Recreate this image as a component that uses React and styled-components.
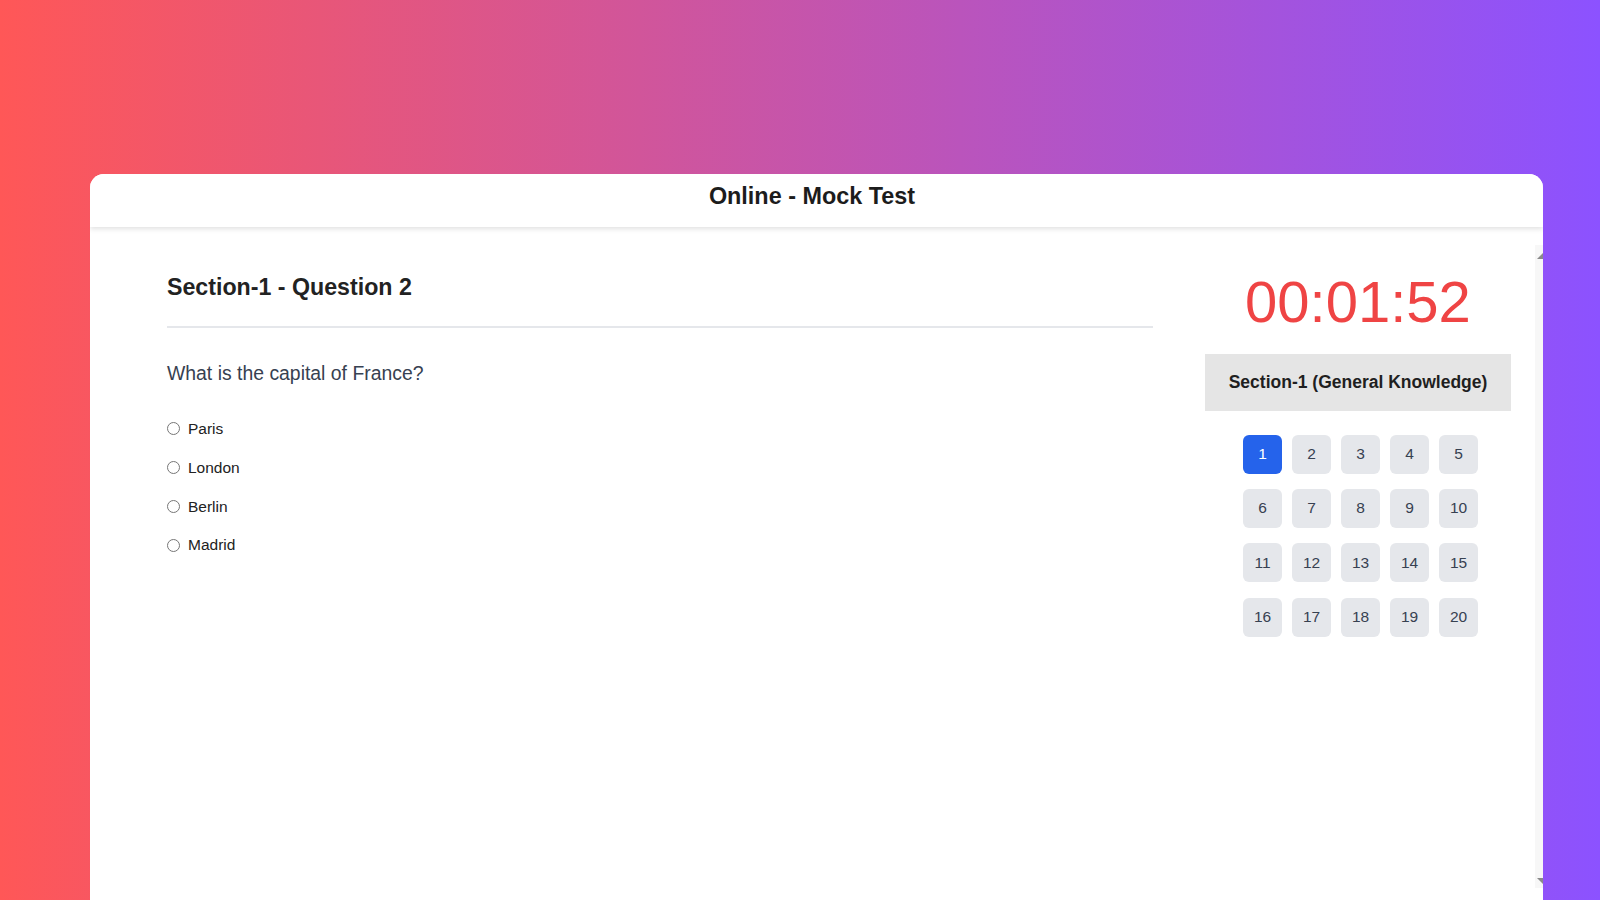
import React, { useState } from "react";
import styled, { createGlobalStyle } from "styled-components";

const GlobalStyle = createGlobalStyle`
  html, body {
    margin: 0;
    padding: 0;
    height: 100%;
    overflow: hidden;
  }
  body {
    font-family: "Liberation Sans", Arial, sans-serif;
    background: linear-gradient(90deg, #ff5757 0%, #8c52ff 100%);
  }
`;

const QUESTION = {
  section: "Section-1",
  number: 2,
  text: "What is the capital of France?",
  options: ["Paris", "London", "Berlin", "Madrid"],
};

const Page = styled.div`
  padding: 174px 57px 0 90px;
  height: 900px;
  box-sizing: border-box;
`;

const Card = styled.div`
  background: #fff;
  border-radius: 14px 14px 0 0;
  height: 740px;
  display: flex;
  flex-direction: column;
  overflow: hidden;
`;

const Header = styled.header`
  position: relative;
  z-index: 1;
  height: 53px;
  box-sizing: border-box;
  padding: 9px 9px 0 0;
  text-align: center;
  background: #fff;
  box-shadow: 0 2px 5px rgba(0, 0, 0, 0.12);
`;

const Title = styled.h1`
  margin: 0;
  font-size: 23.4px;
  line-height: 1.15;
  font-weight: 700;
  color: #1c1c1c;
`;

const Body = styled.div`
  flex: 1;
  display: flex;
  min-height: 0;
`;

const Main = styled.main`
  flex: 1;
  display: flex;
  gap: 52px;
  padding: 42px 24px 0 77px;
`;

const QuestionPane = styled.section`
  flex: 1;
  padding-top: 5px;
`;

const QuestionHeading = styled.h2`
  margin: 0;
  padding-bottom: 25px;
  border-bottom: 2px solid #e5e7eb;
  font-size: 23.2px;
  line-height: 1.15;
  font-weight: 700;
  color: #222;
`;

const QuestionText = styled.p`
  margin: 34px 0 0;
  font-size: 19.4px;
  line-height: 1.15;
  color: #374151;
`;

const Options = styled.div`
  display: flex;
  flex-direction: column;
  gap: 20.8px;
  margin-top: 36px;
`;

const Option = styled.label`
  display: flex;
  align-items: center;
  gap: 8px;
  height: 18px;
  font-size: 15.5px;
  color: #222;
  cursor: pointer;

  input {
    margin: 0;
    width: 13px;
    height: 13px;
  }
`;

const SidePane = styled.aside`
  width: 306px;
  display: flex;
  flex-direction: column;
  align-items: center;
`;

const Timer = styled.div`
  font-size: 58px;
  line-height: 1.15;
  color: #ef4444;
  margin-bottom: 18px;
`;

const SectionTitle = styled.div`
  align-self: stretch;
  background: #e5e5e5;
  padding: 18.5px 0;
  text-align: center;
  font-size: 17.5px;
  line-height: 20px;
  font-weight: 700;
  color: #1f1f1f;
`;

const NumberGrid = styled.div`
  display: grid;
  grid-template-columns: repeat(5, 39px);
  column-gap: 10px;
  row-gap: 15.3px;
  margin: 24px 0 0 5px;
`;

const NumberButton = styled.button`
  width: 39px;
  height: 39px;
  border: none;
  border-radius: 6px;
  padding: 0;
  font-family: "Liberation Sans", Arial, sans-serif;
  font-size: 15.5px;
  background: ${(p) => (p.$active ? "#2563eb" : "#e5e7eb")};
  color: ${(p) => (p.$active ? "#fff" : "#374151")};
  cursor: pointer;
`;

const ScrollRail = styled.div`
  width: 8px;
  margin: 18px 0 26px;
  background: #f7f7f7;
  display: flex;
  flex-direction: column;
  justify-content: space-between;
  padding: 7px 0 4px;
`;

const Arrow = ({ down }) => (
  <svg width="8" height="7" viewBox="0 0 8 7">
    <polygon
      points={down ? "2,1 8,1 8,7" : "2,7 8,1 8,7"}
      fill="#8a8a8a"
    />
  </svg>
);

export default function App() {
  const [answer, setAnswer] = useState(null);
  const [current, setCurrent] = useState(1);

  return (
    <>
      <GlobalStyle />
      <Page>
        <Card>
          <Header>
            <Title>Online - Mock Test</Title>
          </Header>
          <Body>
            <Main>
              <QuestionPane>
                <QuestionHeading>
                  {QUESTION.section} - Question {QUESTION.number}
                </QuestionHeading>
                <QuestionText>{QUESTION.text}</QuestionText>
                <Options>
                  {QUESTION.options.map((opt) => (
                    <Option key={opt}>
                      <input
                        type="radio"
                        name="answer"
                        checked={answer === opt}
                        onChange={() => setAnswer(opt)}
                      />
                      {opt}
                    </Option>
                  ))}
                </Options>
              </QuestionPane>
              <SidePane>
                <Timer>00:01:52</Timer>
                <SectionTitle>Section-1 (General Knowledge)</SectionTitle>
                <NumberGrid>
                  {Array.from({ length: 20 }, (_, i) => i + 1).map((n) => (
                    <NumberButton
                      key={n}
                      $active={n === current}
                      onClick={() => setCurrent(n)}
                    >
                      {n}
                    </NumberButton>
                  ))}
                </NumberGrid>
              </SidePane>
            </Main>
            <ScrollRail>
              <Arrow />
              <Arrow down />
            </ScrollRail>
          </Body>
        </Card>
      </Page>
    </>
  );
}
